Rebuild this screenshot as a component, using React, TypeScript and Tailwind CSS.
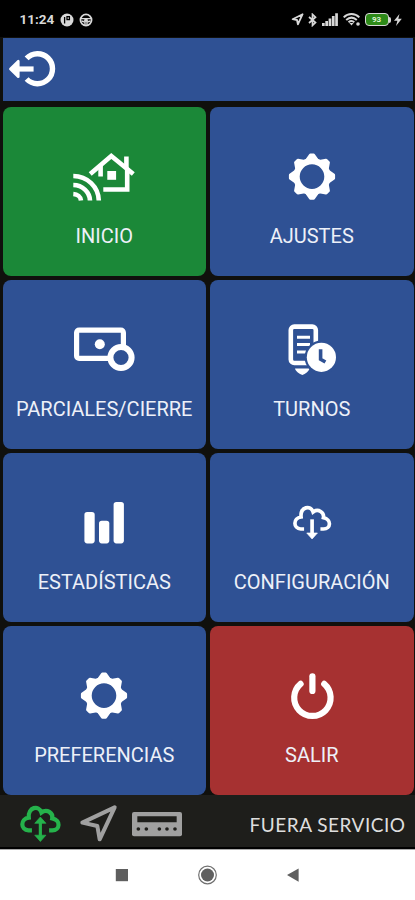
import type { ReactNode } from "react"
import clsx from "clsx"

const CLOUD =
  "M250 117 H240 C217 116 216 84 241 81 C238 50 270 44 277 66 C293 54 311 68 308 83 C333 88 331 117 308 117 H299"

function GearIcon() {
  return (
    <svg width="64" height="60" viewBox="0 0 64 60" fill="none" stroke="#fff">
      <circle cx="32" cy="29.6" r="15.5" strokeWidth="6.4" />
      {[0, 45, 90, 135, 180, 225, 270, 315].map((angle) => (
        <path
          key={angle}
          d="M27.2 12.6 L30.4 8 H33.6 L36.8 12.6 Z"
          fill="#fff"
          strokeWidth="3"
          strokeLinejoin="round"
          transform={`rotate(${angle} 32 29.6)`}
        />
      ))}
    </svg>
  )
}

function HomeIcon() {
  return (
    <svg width="64" height="60" viewBox="0 0 64 60" fill="none" stroke="#fff" strokeWidth="4.6">
      <path d="M18.2 27 L39.3 9 L61.3 27" />
      <path d="M54.4 9.5 V22" />
      <path d="M28.6 19 V29.5 M55.2 21 V42.5 H31.3" />
      <path d="M35.3 24 h8.8 v8.8 h-8.8z" fill="#fff" stroke="none" />
      <path d="M1.3 29 A25.5 25 0 0 1 26.8 53.5 M1.3 38 A17 16 0 0 1 18 53.5 M1.3 47 A8.4 7 0 0 1 9 53.5" />
    </svg>
  )
}

function CashIcon() {
  return (
    <svg width="64" height="60" viewBox="0 0 64 60" fill="none" stroke="#fff">
      <rect x="4.6" y="10.2" width="46.8" height="28.2" rx="2.5" strokeWidth="5.2" />
      <circle cx="27.8" cy="24.2" r="5" fill="#fff" stroke="none" />
      <circle cx="49" cy="37.5" r="10.6" fill="#2f5194" strokeWidth="6" />
    </svg>
  )
}

function ShiftIcon() {
  return (
    <svg width="64" height="60" viewBox="0 0 64 60" fill="none" stroke="#fff" strokeWidth="4.6">
      <rect x="10.8" y="6.6" width="25" height="36.4" rx="3.5" />
      <path d="M17 17.3 H30 M17 24.5 H30 M17 32 H26" strokeWidth="3" />
      <path d="M15 48.6 H29.5 C29 51 25 54.5 22.4 55 C19.5 54.5 15.5 51 15 48.6Z" fill="#fff" stroke="none" />
      <circle cx="41.4" cy="37.3" r="16.8" fill="#2f5194" stroke="none" />
      <circle cx="41.4" cy="37.3" r="14.6" fill="#fff" stroke="none" />
      <path d="M40.6 29.3 V39.2 L45.4 42" stroke="#2f5194" strokeWidth="3.6" />
    </svg>
  )
}

function BarsIcon() {
  return (
    <svg width="64" height="60" viewBox="0 0 64 60" fill="#fff">
      <rect x="12.4" y="19" width="10.3" height="31.4" rx="2.8" />
      <rect x="27" y="27.7" width="10.3" height="22.7" rx="2.8" />
      <rect x="41.6" y="9" width="10.3" height="41.4" rx="2.8" />
    </svg>
  )
}

function DownloadIcon() {
  return (
    <svg width="64" height="60" viewBox="177.75 9 192 180" fill="none" stroke="#fff" strokeWidth="11">
      <path d={CLOUD} />
      <path d="M274 88 V138" />
      <path d="M258 129 H290 L274 147Z" fill="#fff" stroke="#fff" strokeWidth="2" strokeLinejoin="round" />
    </svg>
  )
}

function PowerIcon() {
  return (
    <svg width="64" height="60" viewBox="0 0 64 60" fill="none" stroke="#fff" strokeWidth="6.2" strokeLinecap="round">
      <path d="M20.6 17.9 A18.2 18.2 0 1 0 44.2 17.9" />
      <path d="M32.4 10.3 V25" />
    </svg>
  )
}

interface Tile {
  label: string
  color: string
  icon: ReactNode
}

const tiles: Tile[] = [
  { label: "INICIO", color: "bg-[#1b8838]", icon: <HomeIcon /> },
  { label: "AJUSTES", color: "bg-[#2f5194]", icon: <GearIcon /> },
  { label: "PARCIALES/CIERRE", color: "bg-[#2f5194]", icon: <CashIcon /> },
  { label: "TURNOS", color: "bg-[#2f5194]", icon: <ShiftIcon /> },
  { label: "ESTADÍSTICAS", color: "bg-[#2f5194]", icon: <BarsIcon /> },
  { label: "CONFIGURACIÓN", color: "bg-[#2f5194]", icon: <DownloadIcon /> },
  { label: "PREFERENCIAS", color: "bg-[#2f5194]", icon: <GearIcon /> },
  { label: "SALIR", color: "bg-[#a63131]", icon: <PowerIcon /> },
]

function StatusBar() {
  return (
    <div className="flex h-[37px] items-center bg-black pt-[2px] pl-[19.5px] pr-[13px] text-[#d8d8d8]">
      <span className="w-[35px] text-[13.5px] leading-none font-bold whitespace-nowrap">11:24</span>
      <svg className="ml-[5px]" width="14" height="14" viewBox="0 0 14 14">
        <circle cx="7" cy="7" r="6.5" fill="currentColor" />
        <path d="M4.6 10.6 V4 M7 3.6 h2.4 v3 h-2.4z" fill="none" stroke="#000" strokeWidth="1.3" />
      </svg>
      <svg className="ml-[5.5px]" width="14" height="14" viewBox="0 0 14 14" fill="none" stroke="currentColor">
        <circle cx="7" cy="7" r="5.6" strokeWidth="1.7" />
        <path d="M2 5.6 H12 M2.5 8 L6 9 V12 M11.5 8 L8 9 V12" strokeWidth="1.4" />
        <circle cx="7" cy="7.2" r="1.9" fill="currentColor" stroke="none" />
      </svg>
      <div className="ml-auto flex items-center">
        <svg width="13" height="13" viewBox="0 0 13 13" fill="none" stroke="currentColor" strokeWidth="1.8">
          <path d="M11.6 1.2 L1.6 6.2 L6 7 L6.9 11.4Z" strokeLinejoin="round" />
        </svg>
        <svg className="ml-[4px]" width="9" height="14" viewBox="0 0 9 14" fill="none" stroke="currentColor" strokeWidth="1.7">
          <path d="M1 4 L7.5 9.6 L4.5 12.4 V1.4 L7.5 4.2 L1 10" />
        </svg>
        <svg className="ml-[5px]" width="16" height="13" viewBox="0 0 16 13" fill="currentColor">
          <path d="M0 10h2.7v3H0z M3.3 8h2.7v5H3.3z M6.6 5.5h2.7V13H6.6z M9.9 3h2.7v10H9.9z M13.2 0.3h2.7V13h-2.7z" />
        </svg>
        <svg className="ml-[5px]" width="18" height="13" viewBox="0 0 18 13" fill="none" stroke="currentColor" strokeWidth="2">
          <path d="M0.7 4.4 C5 0 12 0 16.3 4.4 M3.2 7 C6.5 4 10.5 4 13.8 7 M5.5 9.3 C7.5 7.7 9.5 7.7 11.3 9.3" />
          <path d="M6.4 10 H10.6 L8.5 12.4Z" fill="currentColor" stroke="none" />
          <circle cx="15" cy="11" r="1.8" fill="currentColor" stroke="none" />
        </svg>
        <div className="ml-[4px] flex h-[13px] w-[24px] items-center justify-center rounded-[4px] border-[1.5px] border-[#d8d8d8] bg-[#2d8a18] text-[8px] leading-none font-bold text-[#dcf3d3]">
          93
        </div>
        <div className="h-[6px] w-[2.5px] rounded-r-full bg-[#d8d8d8]" />
        <svg className="ml-[3px]" width="8" height="12" viewBox="0 0 8 12" fill="currentColor">
          <path d="M5.5 0 L0 6.8 H3.4 L2 12 L7.8 4.8 H4.3Z" />
        </svg>
      </div>
    </div>
  )
}

function Header() {
  return (
    <header className="mr-[2px] ml-[2.5px] mt-[0.5px] flex h-[63px] items-center bg-[#2f5194]">
      <svg className="ml-[5.5px]" width="52" height="44" viewBox="8 47 52 44" fill="none" stroke="#fff">
        <path d="M26.6 58.4 A15 15 0 1 1 26.6 79" strokeWidth="5.4" />
        <path d="M17 69 H33.6" strokeWidth="5.2" />
        <path d="M10.4 69 L18.3 61.2 V76.8Z" fill="#fff" strokeWidth="2.6" strokeLinejoin="round" />
      </svg>
    </header>
  )
}

function Footer() {
  return (
    <footer className="flex h-[54px] items-center border-b-2 border-black bg-[#1e1e1b] pt-[6px] pl-[19px] pr-[9.5px]">
      <svg width="42" height="40" viewBox="213 42 120 114" fill="none" stroke="#25b24b" strokeWidth="12">
        <path d={CLOUD} />
        <path d="M274 88 V138" strokeWidth="9" />
        <path d="M258 97 H290 L274 79Z M258 131 H290 L274 149Z" fill="#25b24b" strokeWidth="2" strokeLinejoin="round" />
      </svg>
      <svg className="ml-[18px]" width="40" height="40" viewBox="237 75 120 120" fill="none" stroke="#a0a0a0" strokeWidth="12" strokeLinejoin="round">
        <path d="M344 85 L247 131 L292 141 L299 181Z" />
      </svg>
      <svg className="ml-[12px]" width="52" height="26" viewBox="392 94 156 78" fill="#a0a0a0">
        <rect x="395" y="97" width="150" height="73" rx="6" />
        <path d="M411 110h118v18H411z" fill="#1e1e1b" />
        {[414, 438, 477, 500, 524].map((x) => (
          <circle key={x} cx={x} cy="148" r="5.5" fill="#1e1e1b" />
        ))}
      </svg>
      <span className="ml-auto font-['Lato',sans-serif] text-[19px] leading-none tracking-[0.5px] whitespace-nowrap text-[#dedede]">
        FUERA SERVICIO
      </span>
    </footer>
  )
}

function NavigationBar() {
  return (
    <nav className="flex flex-1 items-center justify-center border-t border-[#aaa] bg-white pr-[2px]">
      <svg width="190" height="24" viewBox="112 863 190 24" fill="#5f5f5f">
        <path d="M115.8 869h12.2v12.2h-12.2z" />
        <circle cx="207.5" cy="875" r="6.5" />
        <circle cx="207.5" cy="875" r="8.8" fill="none" stroke="#707070" strokeWidth="1.2" />
        <path d="M287 875 L298.6 868.5 V881.7Z" />
      </svg>
    </nav>
  )
}

export default function App() {
  return (
    <div className="flex h-[900px] w-[415px] flex-col overflow-hidden bg-[#10100d] font-['Roboto',sans-serif]">
      <StatusBar />
      <Header />
      <main className="mt-[6.5px] grid grid-cols-2 gap-x-[4px] gap-y-[4px] pr-[1.5px] pl-[2.5px]">
        {tiles.map((tile) => (
          <button
            key={tile.label}
            className={clsx("flex h-[169px] flex-col items-center rounded-[8px] pt-[40px]", tile.color)}
          >
            {tile.icon}
            <span className="mt-[17px] text-[20px] leading-6 whitespace-nowrap text-[#edf0f8]">{tile.label}</span>
          </button>
        ))}
      </main>
      <Footer />
      <NavigationBar />
    </div>
  )
}
